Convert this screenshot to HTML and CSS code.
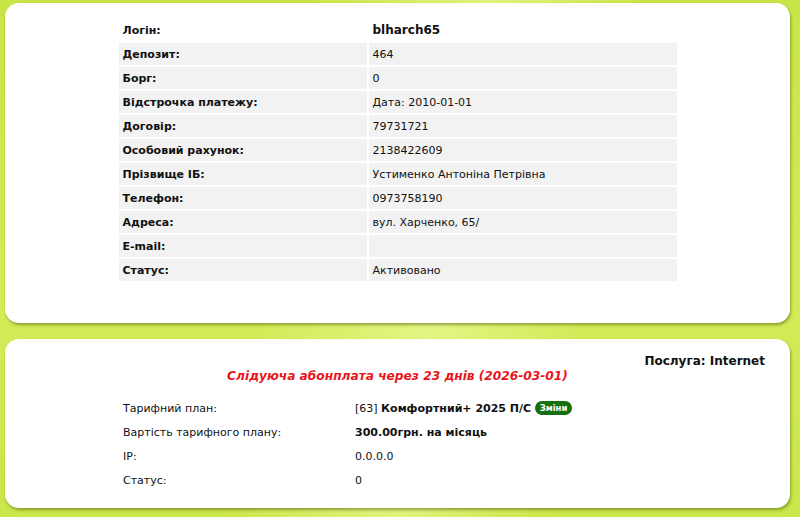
FILE: index.html
```html
<!DOCTYPE html>
<html>
<head>
    <title>Кабінет абонента</title>
    <link rel="stylesheet" href="styles.css">
</head>
<body>

    <div class="box box-info">
        <table class="info">
            <tr class="head">
                <td class="lbl">Логін:</td>
                <td class="val"><b>blharch65</b></td>
            </tr>
            <tr><td class="lbl">Депозит:</td><td class="val">464</td></tr>
            <tr><td class="lbl">Борг:</td><td class="val">0</td></tr>
            <tr><td class="lbl">Відстрочка платежу:</td><td class="val">Дата: 2010-01-01</td></tr>
            <tr><td class="lbl">Договір:</td><td class="val">79731721</td></tr>
            <tr><td class="lbl">Особовий рахунок:</td><td class="val">2138422609</td></tr>
            <tr><td class="lbl">Прізвище ІБ:</td><td class="val">Устименко Антоніна Петрівна</td></tr>
            <tr><td class="lbl">Телефон:</td><td class="val">0973758190</td></tr>
            <tr><td class="lbl">Адреса:</td><td class="val">вул. Харченко, 65/</td></tr>
            <tr><td class="lbl">E-mail:</td><td class="val"></td></tr>
            <tr><td class="lbl">Статус:</td><td class="val">Активовано</td></tr>
        </table>
    </div>

    <div class="box box-service">
        <div class="service">Послуга: Internet</div>
        <div class="next-pay">Слідуюча абонплата через 23 днів (2026-03-01)</div>
        <table class="plan">
            <tr>
                <td class="plbl">Тарифний план:</td>
                <td>[63] <b>Комфортний+ 2025 П/С</b> <span class="change">Зміни</span></td>
            </tr>
            <tr>
                <td class="plbl">Вартість тарифного плану:</td>
                <td><b>300.00грн. на місяць</b></td>
            </tr>
            <tr><td class="plbl">IP:</td><td>0.0.0.0</td></tr>
            <tr><td class="plbl">Статус:</td><td>0</td></tr>
        </table>
    </div>

</body>
</html>
```

FILE: styles.css
```css
body {
    margin: 0;
    padding: 3px 10px 0 5px;
    height: 517px;
    box-sizing: border-box;
    overflow: hidden;
    font-family: "DejaVu Sans", Verdana, sans-serif;
    font-size: 11px;
    color: #111;
    background-color: #cde94e;
    background-image:
        linear-gradient(100deg, rgba(255,255,255,0) 35%, rgba(240,252,160,0.6) 55%, rgba(255,255,255,0) 72%),
        linear-gradient(180deg, #c8e548 0%, #d2ec58 60%, #c9e64a 100%);
}

.box {
    background: #fff;
    border-radius: 14px;
    box-shadow: 1px 2px 3px rgba(70, 90, 0, 0.5);
}

.box-info {
    height: 320px;
    padding-top: 14px;
    box-sizing: border-box;
}

.box-service {
    margin-top: 16px;
    height: 169px;
    padding: 15px 24px 0 0;
    box-sizing: border-box;
}

table.info {
    width: 562px;
    margin: 0 auto;
    border-spacing: 2px;
}

table.info td {
    height: 22px;
    padding: 0 5px 0 4px;
    background: #f2f2f2;
}

table.info tr.head td {
    background: #fff;
}

table.info .lbl {
    width: 239px;
    font-weight: bold;
}

table.info tr.head .val {
    font-size: 12px;
}

.service {
    text-align: right;
    font-weight: bold;
    font-size: 12px;
    height: 15px;
    padding-right: 1px;
}

.next-pay {
    text-align: center;
    padding-left: 24px;
    color: #e8141b;
    font-weight: bold;
    font-style: italic;
    font-size: 12.2px;
}

table.plan {
    width: 562px;
    margin: 12px 0 0 111px;
    border-spacing: 2px;
}

table.plan td {
    height: 22px;
    padding: 0 5px;
}

table.plan .plbl {
    width: 220px;
}

.change {
    display: inline-block;
    background: #16700f;
    color: #fff;
    font-size: 8.5px;
    font-weight: bold;
    padding: 2px 5px;
    border-radius: 8px;
    vertical-align: 1px;
}
```
